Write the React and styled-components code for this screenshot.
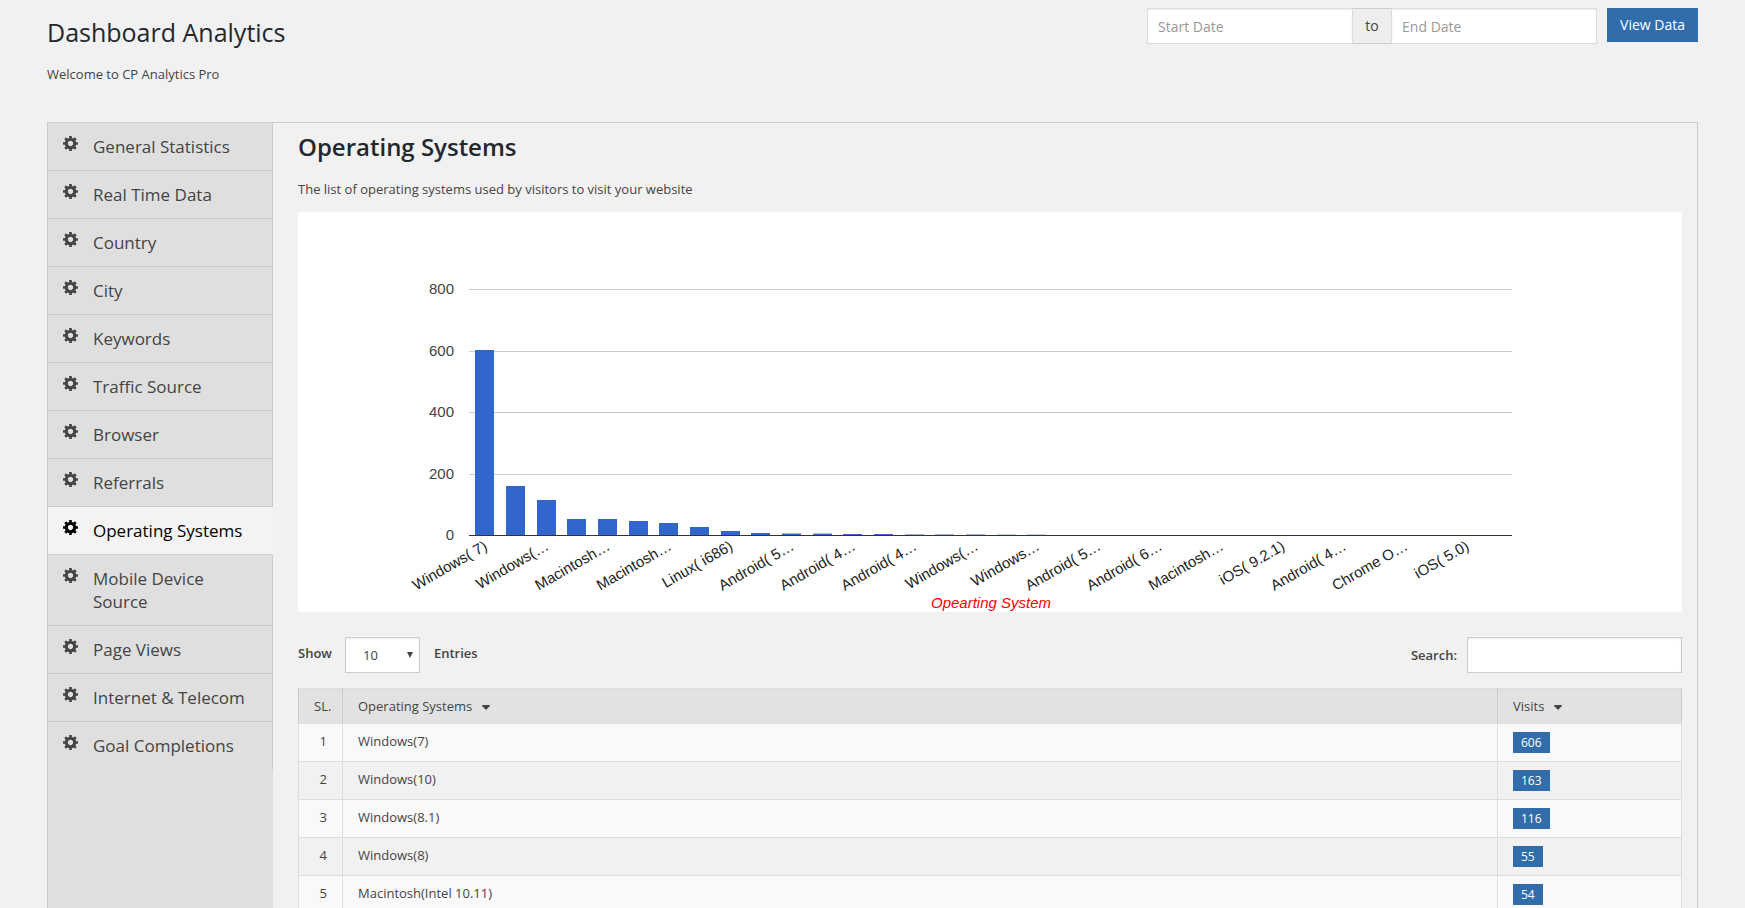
import React from "react";
import styled, { createGlobalStyle, css } from "styled-components";

const GlobalStyle = createGlobalStyle`
  * { box-sizing: border-box; }
  body {
    margin: 0;
    background: #f1f1f1;
    color: #444;
    font: 400 13px/20px "Open Sans", "Liberation Sans", sans-serif;
  }
  input, select, button { font-family: inherit; }
`;

const Page = styled.div`
  display: flex;
  flex-direction: column;
  height: 100vh;
  padding: 0 47px;
  overflow: hidden;
`;

const Header = styled.header`
  display: flex;
  justify-content: space-between;
  align-items: flex-start;
  flex: none;
  min-height: 122px;
  padding-top: 8px;
`;

const PageTitle = styled.h1`
  margin: 8px 0 16px;
  color: #23282d;
  font-size: 25px;
  font-weight: 400;
  line-height: 32px;
`;

const Text = styled.p`
  margin: 0;
`;

const DateForm = styled.form`
  display: flex;
  align-items: flex-start;
  gap: 10px;
`;

const DateRange = styled.div`
  display: flex;
`;

const field = css`
  height: 36px;
  border: 1px solid #ccc;
  border-radius: 0;
  background: #fff;
  color: #444;
  box-shadow: inset 0 1px 2px rgba(0, 0, 0, 0.07);
`;

const DateInput = styled.input`
  ${field}
  width: 206px;
  padding: 0 10px;
  border-color: #ddd;
  font-size: 14px;
  &::placeholder { color: #999; opacity: 1; }
`;

const RangeAddon = styled.span`
  width: 38px;
  height: 36px;
  border: solid #ccc;
  border-width: 1px 0;
  background: #eee;
  font-size: 14px;
  line-height: 34px;
  text-align: center;
`;

const ViewButton = styled.button`
  height: 34px;
  padding: 0 13px 2px;
  border: 0;
  background: #316cab;
  color: #fff;
  font-size: 14px;
`;

const Panel = styled.div`
  display: flex;
  flex: 1;
  min-height: 0;
  border: 1px solid #ccc;
  border-bottom: 0;
`;

const Sidebar = styled.nav`
  flex: none;
  width: 225px;
  background: #dfdfdf;
`;

const NavLink = styled.a`
  display: flex;
  align-items: flex-start;
  gap: 15px;
  padding: 12px 20px 12px 15px;
  border-right: 1px solid ${(p) => (p.$active ? "#f3f3f3" : "#ccc")};
  border-bottom: 1px solid ${(p) => (p.$last ? "transparent" : "#ccc")};
  background: ${(p) => (p.$active ? "#f3f3f3" : "#dfdfdf")};
  color: ${(p) => (p.$active ? "#000" : "#444")};
  font-size: 17px;
  line-height: 23px;
  text-decoration: none;
  svg { flex: none; margin-top: 1px; }
`;

const Content = styled.main`
  flex: 1;
  min-width: 0;
  padding: 8px 15px 0 25px;
`;

const SectionTitle = styled.h2`
  margin: 0 0 16px;
  color: #23282d;
  font-size: 24px;
  font-weight: 600;
  line-height: 32px;
`;

const ChartBox = styled.div`
  margin: 13px 0 25px;
  background: #fff;
  svg { display: block; width: 100%; height: auto; }
  text {
    font-family: "Liberation Sans", Arial, sans-serif;
    font-size: 15px;
    fill: #222;
  }
  .tick { fill: #444; }
  .title { fill: #f00; font-style: italic; }
`;

const TableTools = styled.div`
  display: flex;
  justify-content: space-between;
  margin-bottom: 15px;
`;

const ToolLabel = styled.label`
  display: flex;
  align-items: center;
  font-weight: 600;
`;

const ToolText = styled.span`
  padding-bottom: 4px;
`;

const SelectWrap = styled.span`
  position: relative;
  margin: 0 14px 0 13px;
  svg {
    position: absolute;
    right: 7px;
    top: 15px;
    pointer-events: none;
  }
`;

const PageSize = styled.select`
  ${field}
  display: block;
  width: 75px;
  padding: 0 17px;
  appearance: none;
  font-size: 13px;
`;

const SearchInput = styled.input`
  ${field}
  width: 215px;
  margin-left: 10px;
  padding: 0 10px;
  font-size: 13px;
`;

const Table = styled.table`
  width: 100%;
  table-layout: fixed;
  border-collapse: collapse;
`;

const Th = styled.th`
  width: ${(p) => p.$width || "auto"};
  padding: 7px 15px;
  border: 1px solid #ddd;
  border-left-color: #ccc;
  border-right-color: #ccc;
  background: #e2e2e2;
  font-weight: 400;
  text-align: left;
  white-space: nowrap;
  svg { margin-left: 10px; vertical-align: 1px; }
`;

const Row = styled.tr`
  background: ${(p) => (p.$odd ? "#f9f9f9" : "#f1f1f1")};
`;

const Td = styled.td`
  height: 38px;
  padding: 8px 15px;
  border: 1px solid #ddd;
  line-height: 18px;
  vertical-align: top;
  text-align: ${(p) => (p.$number ? "right" : "left")};
`;

const Badge = styled.span`
  display: block;
  width: fit-content;
  padding: 0 8px;
  background: #316cab;
  color: #fff;
  font-size: 12px;
  line-height: 21px;
`;

const Gear = () => (
  <svg width="15" height="15" viewBox="1 2 17 17" fill="currentColor" aria-hidden="true">
    <path d="M18 12h-2.18c-.17.7-.44 1.35-.81 1.93l1.54 1.54-2.1 2.1-1.54-1.54c-.58.36-1.23.63-1.91.79V19H8v-2.18c-.68-.16-1.33-.43-1.91-.79l-1.54 1.54-2.12-2.12 1.54-1.54c-.36-.58-.63-1.23-.79-1.91H1V9.03h2.17c.16-.7.44-1.35.8-1.94L2.43 5.55l2.1-2.1 1.54 1.54c.58-.37 1.24-.64 1.93-.81V2h3v2.18c.68.16 1.33.43 1.91.79l1.54-1.54 2.12 2.12-1.54 1.54c.36.59.64 1.24.8 1.94H18V12zm-8.5 1.5c1.66 0 3-1.34 3-3s-1.34-3-3-3-3 1.34-3 3 1.34 3 3 3z" />
  </svg>
);

const Caret = () => (
  <svg width="8" height="5" viewBox="0 0 8 5" fill="#444" aria-hidden="true">
    <path d="M.5 0h7q.8.2.3.9L4.5 4.6q-.5.5-1 0L.2.9Q-.2.2.5 0z" />
  </svg>
);

const navItems = [
  "General Statistics", "Real Time Data", "Country", "City", "Keywords",
  "Traffic Source", "Browser", "Referrals", "Operating Systems",
  "Mobile Device Source", "Page Views", "Internet & Telecom", "Goal Completions",
];

const rows = [
  ["Windows(7)", 606],
  ["Windows(10)", 163],
  ["Windows(8.1)", 116],
  ["Windows(8)", 55],
  ["Macintosh(Intel 10.11)", 54],
];

// Plot area of the chart, in viewBox units
const plot = { left: 171, right: 1214, bottom: 323 };
const pitch = 1043 / 34;
const gridLines = [[800, 77], [600, 139], [400, 200], [200, 262], [0, 323]];
const barHeights = [
  185, 49, 35, 16, 16, 14, 12, 8, 4, 2, 1.5, 1.4, 1, 1, 0.5, 0.5, 0.5, 0.3, 0.3,
];
// One label for every second category
const barLabels = [
  "Windows( 7)", "Windows(…", "Macintosh…", "Macintosh…", "Linux( i686)",
  "Android( 5…", "Android( 4…", "Android( 4…", "Windows(…", "Windows…",
  "Android( 5…", "Android( 6…", "Macintosh…", "iOS( 9.2.1)", "Android( 4…",
  "Chrome O…", "iOS( 5.0)",
];

const VisitsChart = () => (
  <ChartBox>
    <svg viewBox="0 0 1384 400" role="img" aria-label="Visits by operating system">
      {gridLines.map(([value, y]) => (
        <g key={value}>
          <text className="tick" x="156" y={y + 5} textAnchor="end">{value}</text>
          {value > 0 && (
            <rect x={plot.left} y={y} width={plot.right - plot.left} height="1" fill="#ccc" />
          )}
        </g>
      ))}
      {barHeights.map((h, i) => (
        <rect
          key={i}
          x={Math.round(plot.left + 6.3 + i * pitch)}
          y={plot.bottom - h}
          width="19"
          height={h}
          fill="#36c"
        />
      ))}
      <rect x={plot.left} y={plot.bottom} width={plot.right - plot.left} height="1" fill="#333" />
      {barLabels.map((label, i) => {
        const x = plot.left + (i * 2 + 0.5) * pitch + 4;
        return (
          <text key={i} x={x} y="337" textAnchor="end" transform={`rotate(-30 ${x} 337)`}>
            {label}
          </text>
        );
      })}
      <text className="title" x="693" y="396" textAnchor="middle">Opearting System</text>
    </svg>
  </ChartBox>
);

export default function App() {
  return (
    <>
      <GlobalStyle />
      <Page>
        <Header>
          <div>
            <PageTitle>Dashboard Analytics</PageTitle>
            <Text>Welcome to CP Analytics Pro</Text>
          </div>
          <DateForm onSubmit={(e) => e.preventDefault()}>
            <DateRange>
              <DateInput aria-label="Start Date" placeholder="Start Date" />
              <RangeAddon>to</RangeAddon>
              <DateInput aria-label="End Date" placeholder="End Date" />
            </DateRange>
            <ViewButton>View Data</ViewButton>
          </DateForm>
        </Header>
        <Panel>
          <Sidebar>
            {navItems.map((item, i) => (
              <NavLink
                key={item}
                href="#"
                $active={item === "Operating Systems"}
                $last={i === navItems.length - 1}
              >
                <Gear />
                <span>{item}</span>
              </NavLink>
            ))}
          </Sidebar>
          <Content>
            <SectionTitle>Operating Systems</SectionTitle>
            <Text>The list of operating systems used by visitors to visit your website</Text>
            <VisitsChart />
            <TableTools>
              <ToolLabel>
                <ToolText>Show</ToolText>
                <SelectWrap>
                  <PageSize defaultValue="10">
                    <option>10</option>
                    <option>25</option>
                    <option>50</option>
                    <option>100</option>
                  </PageSize>
                  <svg width="6" height="6" viewBox="0 0 6 6" fill="#444" aria-hidden="true">
                    <path d="M0 0h6L3 6z" />
                  </svg>
                </SelectWrap>
                <ToolText>Entries</ToolText>
              </ToolLabel>
              <ToolLabel>
                Search:
                <SearchInput type="search" />
              </ToolLabel>
            </TableTools>
            <Table>
              <thead>
                <tr>
                  <Th $width="44px">SL.</Th>
                  <Th>Operating Systems<Caret /></Th>
                  <Th $width="184px">Visits<Caret /></Th>
                </tr>
              </thead>
              <tbody>
                {rows.map(([name, visits], i) => (
                  <Row key={name} $odd={i % 2 === 0}>
                    <Td $number>{i + 1}</Td>
                    <Td>{name}</Td>
                    <Td><Badge>{visits}</Badge></Td>
                  </Row>
                ))}
              </tbody>
            </Table>
          </Content>
        </Panel>
      </Page>
    </>
  );
}
